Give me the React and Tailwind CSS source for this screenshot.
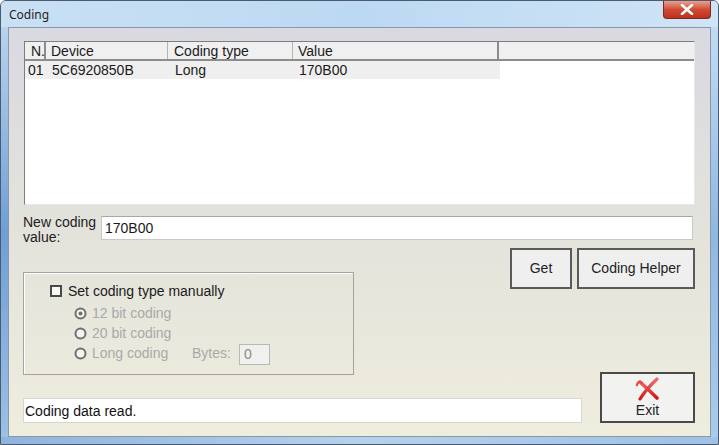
import React from "react";

function Radio({ checked, label }) {
  return (
    <div className="flex items-center gap-[5px] h-[20px] w-[118px]">
      <svg width="13" height="13" viewBox="0 0 13 13">
        <circle cx="6.5" cy="6.5" r="5" fill="#f4f4f0" stroke="#6f6f6f" strokeWidth="2" />
        {checked && <circle cx="6.5" cy="6.5" r="2" fill="#6f6f6f" />}
      </svg>
      <span className="text-[#a9a9a9]">{label}</span>
    </div>
  );
}

export default function App() {
  return (
    <div
      className="w-[719px] h-[445px] flex flex-col bg-gradient-to-b from-[#c4dcf2] to-[#9ec0e2] text-[14px] text-[#1a1a1a] overflow-hidden rounded-t-[6px] border border-[#4a5b70]"
      style={{ fontFamily: '"Liberation Sans", Arial, sans-serif' }}
    >
      {/* Title bar */}
      <div className="h-[26px] flex items-start justify-between shrink-0 bg-gradient-to-r from-[#c9e0f4] via-[#bcd9f3] to-[#cfe4f6]">
        <span
          className="pl-[8px] pt-[5px] text-[12px] text-[#1e1e1e]"
          style={{ fontFamily: '"Noto Sans", "Open Sans", sans-serif' }}
        >
          Coding
        </span>
        <div className="mr-[7px] w-[48px] h-[18px] flex items-center justify-center rounded-b-[4px] border border-t-0 border-[#7a2a20] bg-gradient-to-b from-[#e8a090] via-[#cf4a34] to-[#c0301c]">
          <svg width="14" height="11" viewBox="0 0 14 11">
            <path d="M2 1 L12 10 M12 1 L2 10" stroke="#ffffff" strokeWidth="2.6" strokeLinecap="round" />
          </svg>
        </div>
      </div>

      <div className="flex flex-1 min-h-0">
        <div className="w-[7px] shrink-0 bg-gradient-to-b from-[#b8d3ee] via-[#6f9fd6] to-[#9cc0e6]" />

        {/* Client area */}
        <div className="flex-1 min-w-0 flex flex-col border border-[#8a97a8] bg-gradient-to-b from-[#d9d9e1] via-[#e3e3dc] to-[#efeddd]">
          {/* List view */}
          <div className="mt-[13px] mx-[15px] h-[164px] bg-white border border-[#7d7d7d] border-r-[#e8e8e8] border-b-[#e8e8e8] flex flex-col">
            <div className="flex h-[19px] bg-[#f0f0f0] border-b-2 border-[#8c8c8c] shrink-0">
              <div className="w-[21px] pl-[6px] leading-[18px] border-r-2 border-[#8c8c8c]">N.</div>
              <div className="w-[122px] pl-[5px] leading-[18px] border-r border-[#b5b5b5]">Device</div>
              <div className="w-[125px] pl-[6px] leading-[18px] border-r border-[#b5b5b5]">Coding type</div>
              <div className="w-[206px] pl-[5px] leading-[18px] border-r-2 border-[#8c8c8c]">Value</div>
              <div className="flex-1" />
            </div>
            <div className="flex h-[18px] w-[475px] bg-[#efefef] leading-[18px]">
              <div className="w-[23px] pl-[3px]">01</div>
              <div className="w-[123px] pl-[4px]">5C6920850B</div>
              <div className="w-[125px] pl-[4px]">Long</div>
              <div className="flex-1 pl-[3px]">170B00</div>
            </div>
          </div>

          {/* New coding value */}
          <div className="flex items-start mt-[9px] ml-[14px] mr-[17px]">
            <div className="w-[78px] leading-[15px] pt-[1px] text-[#222]">
              New coding
              <br />
              value:
            </div>
            <div className="flex-1 h-[24px] mt-[2px] bg-white border border-[#c8c8c8] border-t-[#a8a8a8] pl-[3px] leading-[22px]">
              170B00
            </div>
          </div>

          {/* Options + Get / Helper buttons */}
          <div className="flex items-start mt-[3px] ml-[14px] mr-[15px]">
            <div className="mt-[24px] w-[331px] h-[103px] border border-[#a3a3a0] shadow-[inset_1px_1px_0_#ffffff] pt-[10px]">
              <div className="flex items-center ml-[26px] gap-[6px] h-[16px]">
                <div className="w-[12px] h-[12px] border-2 border-[#4a4a4a] bg-[#f8f8f4]" />
                <span>Set coding type manually</span>
              </div>
              <div className="ml-[50px] mt-[4px] flex flex-col">
                <Radio checked label="12 bit coding" />
                <Radio label="20 bit coding" />
                <div className="flex items-center h-[20px]">
                  <Radio label="Long coding" />
                  <span className="text-[#a9a9a9]">Bytes:</span>
                  <div className="ml-[8px] mt-[2px] w-[31px] h-[21px] bg-[#f0f0ee] border border-[#b8b8b8] pl-[4px] leading-[19px] text-[#8a8a8a]">
                    0
                  </div>
                </div>
              </div>
            </div>
            <div className="ml-auto flex gap-[5px]">
              <button className="w-[62px] h-[41px] bg-[#efefef] border-2 border-[#5a5a5a] text-[#222]">
                Get
              </button>
              <button className="w-[118px] h-[41px] bg-[#efefef] border-2 border-[#5a5a5a] text-[#222]">
                Coding Helper
              </button>
            </div>
          </div>

          {/* Status + Exit */}
          <div className="flex items-start -mt-[3px] ml-[14px] mr-[15px]">
            <div className="mt-[26px] w-[559px] h-[25px] bg-white border border-[#d6d6d0] pl-[1px] leading-[24px] text-[#111]">
              Coding data read.
            </div>
            <button className="ml-auto w-[95px] h-[51px] bg-[#f2f2f0] border-2 border-[#4a4a4a] flex flex-col items-center pt-[3px]">
              <svg width="26" height="24" viewBox="0 0 26 24">
                <defs>
                  <linearGradient id="xr" x1="0" y1="0" x2="0" y2="1">
                    <stop offset="0" stopColor="#f06a6a" />
                    <stop offset="1" stopColor="#d01818" />
                  </linearGradient>
                </defs>
                <path d="M5 5 Q13 12 22 21" stroke="url(#xr)" strokeWidth="3.6" fill="none" strokeLinecap="round" />
                <path d="M22 2 Q12 11 5 22" stroke="url(#xr)" strokeWidth="3.2" fill="none" strokeLinecap="round" />
                <path d="M2 8 Q3 3 7 6" stroke="#e64848" strokeWidth="2.4" fill="none" strokeLinecap="round" />
              </svg>
              <span className="text-[#222] leading-[14px] mt-[2px]">Exit</span>
            </button>
          </div>
        </div>

        <div className="w-[7px] shrink-0 bg-gradient-to-b from-[#c2dbf2] via-[#8fb8e2] to-[#aacbeb]" />
      </div>
      <div className="h-[7px] shrink-0 bg-gradient-to-r from-[#8fb4dc] via-[#b6d1ec] to-[#9fc1e4]" />
    </div>
  );
}
